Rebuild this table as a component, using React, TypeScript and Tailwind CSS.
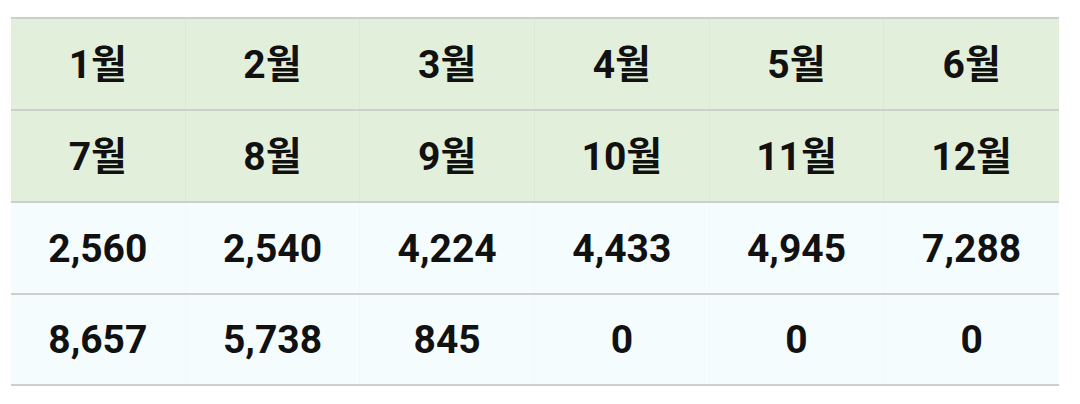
import React from "react";

const header1 = ["1월", "2월", "3월", "4월", "5월", "6월"];
const header2 = ["7월", "8월", "9월", "10월", "11월", "12월"];
const data1 = ["2,560", "2,540", "4,224", "4,433", "4,945", "7,288"];
const data2 = ["8,657", "5,738", "845", "0", "0", "0"];

function Row({ cells, head, last }: { cells: string[]; head: boolean; last?: boolean }) {
  return (
    <div
      className={
        "grid grid-cols-6 border-t-2 border-[#cbd0cb] " +
        (head ? "bg-[#e2efda]" : "bg-[#f5fcfd]") +
        (last ? " h-[93px] border-b-2" : " h-[92px]")
      }
    >
      {cells.map((c, i) => (
        <div
          key={i}
          className={
            "flex items-center justify-center pt-[2px] text-[39px] font-bold text-[#111] " +
            (i < 5 ? (head ? "border-r border-[#dbe8d3]" : "border-r border-[#f2f9fa]") : "")
          }
        >
          {c}
        </div>
      ))}
    </div>
  );
}

export default function App() {
  return (
    <div
      className="w-[1080px] h-[404px] bg-white pt-[17px] pl-[11px]"
      style={{ fontFamily: "Roboto, 'Noto Sans CJK KR', sans-serif" }}
    >
      <div className="w-[1048px]">
        <Row cells={header1} head />
        <Row cells={header2} head />
        <Row cells={data1} head={false} />
        <Row cells={data2} head={false} last />
      </div>
    </div>
  );
}
